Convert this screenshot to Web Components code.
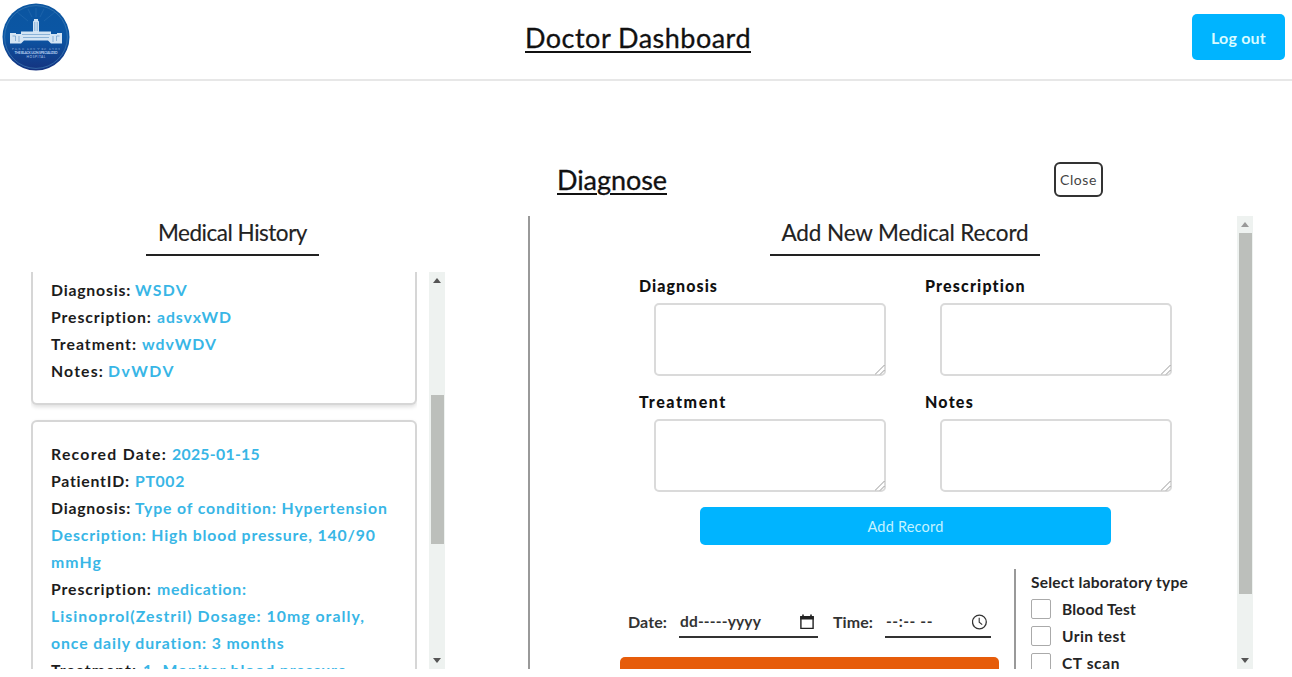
<!DOCTYPE html>
<html lang="en">
<head>
<meta charset="utf-8">
<title>Doctor Dashboard</title>
<style>
html,body{margin:0;height:100%;overflow:hidden;background:#fff}
body{font-family:Lato,"Open Sans",sans-serif;color:#1c1c1c}
</style>
</head>
<body>
<doctor-dashboard></doctor-dashboard>
<script>
const define=(name,html,ready)=>customElements.define(name,class extends HTMLElement{
  constructor(){super();this.attachShadow({mode:'open'}).innerHTML=html;}
  connectedCallback(){if(ready)ready.call(this,this.shadowRoot);}
});

define('doctor-dashboard',`
<style>
:host{display:flex;flex-direction:column;height:677px;width:1292px;box-sizing:border-box}
.heading{display:grid;grid-template-columns:1fr 110px 387px 48px 190px;height:135px;align-items:center;box-sizing:border-box;padding-top:63px}
.heading fit-text{grid-column:2;font-size:27px;line-height:34px;color:#111;-webkit-text-stroke:.3px #111}
.heading close-button{grid-column:4}
main{display:flex;height:453px}
history-panel{width:528px}
record-panel{flex:1}
</style>
<dash-header></dash-header>
<section class="heading"><fit-text w="110" line>Diagnose</fit-text><close-button></close-button></section>
<main><history-panel></history-panel><record-panel></record-panel></main>`);

define('dash-header',`
<style>
:host{display:grid;grid-template-columns:523px 226px 1fr;height:81px;box-sizing:border-box;border-bottom:2px solid #e7e7e7;align-items:center;padding:0 7px 5px 2px}
.title{font-size:27px;line-height:34px;color:#111;-webkit-text-stroke:.3px #111;margin-top:1px}
button{justify-self:end;width:93px;height:46px;border:0;border-radius:5px;background:#00b4ff;color:#d8fbff;font:700 16px Lato,sans-serif;padding:0;display:flex;align-items:center;justify-content:center}
</style>
<hospital-logo></hospital-logo><fit-text class="title" w="226" line>Doctor Dashboard</fit-text>
<button><fit-text w="55">Log out</fit-text></button>`);

define('hospital-logo',`
<style>:host{display:block;width:68px;height:68px}svg{display:block}</style>
<svg width="68" height="68" viewBox="0 0 68 68">
<defs><linearGradient id="g" x1="0" y1="0" x2="0" y2="1"><stop offset="0" stop-color="#0b55a0"/><stop offset=".5" stop-color="#0b56a4"/><stop offset="1" stop-color="#15327f"/></linearGradient></defs>
<circle cx="34" cy="34" r="33.5" fill="url(#g)"/>
<circle cx="34" cy="34" r="31.4" fill="none" stroke="#3f7db5" stroke-width=".7"/>
<path d="M34 14V5M30 14l-4-8M38 14l4-8M26 18L15 9M42 18l11-9" stroke="#2c70b2" stroke-width=".5"/>
<g fill="#d3e4f4"><path d="M31 18.5l1-1v-1.6h4v1.6l1 1V29h-6z"/><path d="M8 30h6v1h5v-2.5h30V31h6v-1h5v10.5H49l-3-3H22l-3 3H8z"/></g>
<path d="M32.8 19v9M35.2 19v9M20 31.5h28M21 34.5h26M10.5 33h3v5M54.5 38v-5h3M17 33v6M51 33v6" stroke="#6c9cca" stroke-width=".7" fill="none"/>
<g fill="#b8cff0" font-family="Lato,sans-serif" text-anchor="middle"><text x="34" y="47" font-size="3.5" textLength="48" opacity=".7">የአዲስ አበባ ጥቁር አንበሳ</text><text x="34" y="51.3" font-size="3.4" font-weight="700" textLength="43">THE BLACK LION SPECIALIZED</text><text x="34" y="54.8" font-size="3.2" textLength="19">HOSPITAL</text></g>
</svg>`);

define('close-button',`
<style>:host{display:block}button{box-sizing:border-box;width:49px;height:35px;padding:0;border:2px solid #333;border-radius:6px;background:#fff;color:#444;font:400 14px Lato,sans-serif;display:flex;align-items:center;justify-content:center;margin-top:-1px}</style>
<button><fit-text w="37">Close</fit-text></button>`);

define('scroll-bar',`
<style>
:host{display:flex;flex-direction:column;width:16px;background:#eef2f0;align-items:center}
i{flex:none;height:17px;display:flex;align-items:center;justify-content:center}
.thumb{width:13px;background:#bcbfbb;margin-top:calc(var(--top) - 17px);height:var(--len)}
.end{margin-top:auto}
</style>
<i><svg width="8" height="5"><path d="M0 5L4 0l4 5z" fill="var(--arrow,#555)"/></svg></i><div class="thumb"></div><i class="end"><svg width="8" height="5"><path d="M0 0h8L4 5z" fill="#555"/></svg></i>`);

define('section-title',`
<style>:host{display:flex;justify-content:center;box-sizing:border-box;height:40px;border-bottom:2px solid #222;font-size:22.5px;line-height:34px;color:#222;-webkit-text-stroke:.15px #222}</style><slot></slot>`);

define('history-panel',`
<style>
:host{display:flex;flex-direction:column;box-sizing:border-box;padding-left:31px}
section-title{width:173px;margin-left:115px}
.view{display:flex;height:397px;margin-top:16px;overflow:hidden}
.cards{width:386px;height:397px;margin-right:12px;overflow:hidden}
scroll-bar{--top:123px;--len:149px}
</style>
<section-title><fit-text w="149">Medical History</fit-text></section-title>
<div class="view"><div class="cards">
<history-card cut>
<history-row label="Diagnosis:" lw="80" gap="4" value="WSDV" vw="53"></history-row>
<history-row label="Prescription:" lw="101" gap="5" value="adsvxWD" vw="75"></history-row>
<history-row label="Treatment:" lw="86" gap="5" value="wdvWDV" vw="75"></history-row>
<history-row label="Notes:" lw="53" gap="4" value="DvWDV" vw="67"></history-row>
</history-card>
<history-card>
<history-row label="Recored Date:" lw="116" gap="5" value="2025-01-15" vw="88"></history-row>
<history-row label="PatientID:" lw="79" gap="5" value="PT002" vw="50"></history-row>
<history-row label="Diagnosis:" lw="80" gap="4" value="Type of condition: Hypertension" vw="253"></history-row>
<history-row value="Description: High blood pressure, 140/90" vw="325"></history-row>
<history-row value="mmHg" vw="51"></history-row>
<history-row label="Prescription:" lw="101" gap="5" value="medication:" vw="90"></history-row>
<history-row value="Lisinoprol(Zestril) Dosage: 10mg orally," vw="314"></history-row>
<history-row value="once daily duration: 3 months" vw="234"></history-row>
<history-row label="Treatment:" lw="86" gap="6" value="1. Monitor blood pressure" vw="204"></history-row>
</history-card>
</div><scroll-bar></scroll-bar></div>`);

define('history-card',`
<style>
:host{display:block;box-sizing:border-box;width:386px;border:2px solid #d6d6d6;border-radius:6px;padding:18px;box-shadow:0 2px 4px #0002;background:#fff}
:host([cut]){border-top:0;border-radius:0 0 6px 6px;padding-top:4px;padding-bottom:19px;margin-bottom:15px}
</style><slot></slot>`);

define('history-row',`
<style>
:host{display:flex;height:27px;font-size:15.8px;line-height:27px;font-weight:700;white-space:nowrap}
.v{color:#38b6e6}
</style>`,function(root){
  const add=(text,w,cls,gap)=>{const t=document.createElement('fit-text');t.textContent=text;t.setAttribute('w',w);t.className=cls;t.style.marginRight=(gap||0)+'px';root.append(t);};
  const a=k=>this.getAttribute(k);
  if(a('label'))add(a('label'),a('lw'),'l',a('gap'));
  add(a('value'),a('vw'),'v');
});

define('record-panel',`
<style>
:host{display:flex;box-sizing:border-box;border-left:2px solid #999;height:453px;overflow:hidden}
.content{width:707px;flex:none;display:flex;flex-direction:column}
section-title{width:270px;margin-left:240px;flex:none}
.form{display:grid;grid-template-columns:247px 247px;column-gap:39px;margin:17px 0 0 109px;grid-auto-rows:116px}
.add{flex:none;width:411px;height:38px;margin:2px 0 0 170px;padding:0;border:0;border-radius:5px;background:#00b4ff;color:#c5f3ff;font:400 14.5px Lato,sans-serif;display:flex;align-items:center;justify-content:center}
.bottom{display:flex;margin-top:24px;height:100px;overflow:hidden}
.schedule{width:379px;margin-left:90px;margin-right:15px;display:flex;flex-direction:column}
.fields{display:flex;flex:none;box-sizing:border-box;align-items:flex-start;padding:38px 8px 0;height:88px;font-size:16px;font-weight:700;line-height:29px;color:#333}
.send{height:30px;flex:none;border-radius:5px;background:#e65c0a}
.date{width:139px;margin:0 15px 0 12px}.time{width:106px;margin-left:12px}
lab-list{width:200px}
scroll-bar{--top:17px;--len:361px;--arrow:#999}
</style>
<div class="content">
<section-title><fit-text w="247">Add New Medical Record</fit-text></section-title>
<div class="form">
<note-field><fit-text w="79">Diagnosis</fit-text></note-field><note-field><fit-text w="101">Prescription</fit-text></note-field>
<note-field><fit-text w="88">Treatment</fit-text></note-field><note-field><fit-text w="49">Notes</fit-text></note-field>
</div>
<button class="add"><fit-text w="76">Add Record</fit-text></button>
<div class="bottom"><div class="schedule"><div class="fields">
<fit-text w="39">Date:</fit-text>
<picker-field class="date"><fit-text w="81">dd-----yyyy</fit-text><svg slot="icon" width="16" height="16" viewBox="0 0 16 16"><path d="M1.9 3h12.2v11.4H1.9z" fill="none" stroke="#222" stroke-width="1.4"/><path d="M1.2 2h13.6v3.5H1.2zM3.2.5h1.6v2H3.2zM11.2.5h1.6v2h-1.6z" fill="#222"/></svg></picker-field>
<fit-text w="40">Time:</fit-text>
<picker-field class="time"><fit-text w="47">--:-- --</fit-text><svg slot="icon" width="16" height="16" viewBox="0 0 16 16"><circle cx="7.4" cy="8" r="6.9" fill="none" stroke="#333" stroke-width="1.3"/><path d="M7.2 3.8v4.4l3 2.4" fill="none" stroke="#333" stroke-width="1.1"/></svg></picker-field>
</div><div class="send"></div></div>
<lab-list></lab-list></div>
</div>
<scroll-bar></scroll-bar>`);

define('note-field',`
<style>
:host{display:flex;flex-direction:column;font-size:16px;font-weight:900;line-height:26px;color:#111}
.box{position:relative;margin:4px 0 0 15px;width:232px;height:73px}
textarea{display:block;box-sizing:border-box;width:100%;height:100%;border:2px solid #dadada;border-radius:5px;resize:none;background:#fff}
svg{position:absolute;right:1px;bottom:1px}
</style>
<slot></slot><div class="box"><textarea></textarea><svg width="10" height="10" viewBox="0 0 10 10"><path d="M0 9.5L9.5 0M5 9.5L9.5 5" stroke="#999" stroke-width="1"/></svg></div>`);

define('picker-field',`
<style>:host{display:flex;box-sizing:border-box;height:31px;border-bottom:2px solid #333;align-items:center;justify-content:space-between;padding:0 3px 0 1px;font-weight:700;font-size:15.5px}::slotted(svg){display:block}</style><slot></slot><slot name="icon"></slot>`);

define('lab-list',`
<style>
:host{display:flex;flex-direction:column;border-left:2px solid #999;padding-left:15px;box-sizing:border-box;font-size:15.5px;font-weight:700;color:#252525}
.row{display:flex;align-items:center;height:27px;flex:none}
i{box-sizing:border-box;width:20px;height:20px;border:1.5px solid #aaa;border-radius:2px;margin-right:11px}
.head{line-height:27px;height:26px;flex:none}
</style>
<div class="head"><fit-text w="157">Select laboratory type</fit-text></div>
<div class="row"><i></i><fit-text w="74">Blood Test</fit-text></div>
<div class="row"><i></i><fit-text w="64">Urin test</fit-text></div>
<div class="row"><i></i><fit-text w="58">CT scan</fit-text></div>`);

// Inline text whose tracking is tuned so the run fills the width in its "w" attribute.
define('fit-text',`
<style>:host{display:block;white-space:nowrap;flex:none}span{display:inline-block}:host([line]) span{text-decoration:underline;text-decoration-thickness:2.4px;text-underline-offset:3px}</style><span><slot></slot></span>`,function(root){
  const w=+this.getAttribute('w'),s=root.querySelector('span'),n=this.textContent.length;
  this.style.width=w+'px';
  s.style.letterSpacing=((w-s.getBoundingClientRect().width)/n)+'px';
});
</script>
</body>
</html>
